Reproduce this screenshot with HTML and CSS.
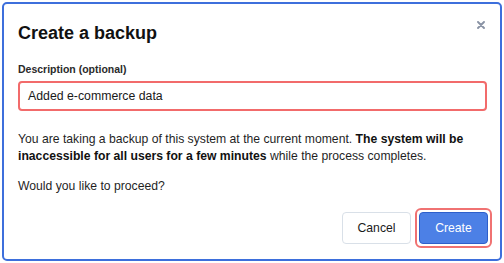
FILE: index.html
```html
<!DOCTYPE html>
<html lang="en">
<head>
<meta charset="utf-8">
<title>Create a backup</title>
<link rel="stylesheet" href="styles.css">
</head>
<body>
<div class="dialog">
  <div class="header">
    <h1 class="title">Create a backup</h1>
    <button class="close" aria-label="Close">
      <svg width="8" height="8" viewBox="0 0 8 8"><path d="M1 1L7 7M7 1L1 7" stroke="#8a93a5" stroke-width="1.9" stroke-linecap="round"/></svg>
    </button>
  </div>
  <label class="label" for="desc">Description (optional)</label>
  <div class="input" id="desc">Added e-commerce data</div>
  <p class="text">You are taking a backup of this system at the current moment. <strong>The system will be inaccessible for all users for a few minutes</strong> while the process completes.</p>
  <p class="text second">Would you like to proceed?</p>
  <div class="actions">
    <button class="btn cancel">Cancel</button>
    <span class="ring"><button class="btn create">Create</button></span>
  </div>
</div>
</body>
</html>
```
FILE: styles.css
```css
html, body {
  margin: 0;
  padding: 0;
  background: #ffffff;
}
body {
  font-family: "Liberation Sans", Arial, sans-serif;
  color: #1a1a1a;
}
.dialog {
  box-sizing: border-box;
  margin: 2px;
  width: 500px;
  height: 259px;
  border: 2px solid #3d6fdc;
  border-radius: 5px;
  padding: 17px 14px 0;
  display: flex;
  flex-direction: column;
}
.header {
  display: flex;
  justify-content: space-between;
  align-items: flex-start;
}
.title {
  margin: 0;
  font-size: 18px;
  line-height: 24px;
  font-weight: 700;
  color: #111111;
}
.close {
  border: 0;
  background: none;
  padding: 0;
  margin: 0 1px 0 0;
  width: 8px;
  height: 8px;
  display: flex;
}
.label {
  display: block;
  margin-top: 17px;
  font-size: 10.5px;
  line-height: 14px;
  font-weight: 700;
  color: #2a2a2a;
}
.input {
  box-sizing: border-box;
  margin-top: 5px;
  margin-right: -1px;
  height: 30px;
  border: 2px solid #f26b6b;
  border-radius: 4px;
  padding: 0 8px;
  font-size: 12.3px;
  line-height: 26px;
  color: #1a1a1a;
}
.text {
  margin: 20px 0 0;
  font-size: 12.2px;
  line-height: 16.5px;
  color: #1f1f1f;
}
.text.second {
  margin-top: 13.5px;
}
.text strong {
  font-weight: 700;
  color: #111111;
}
.actions {
  margin-top: auto;
  margin-bottom: 11px;
  margin-right: -6px;
  display: flex;
  justify-content: flex-end;
  align-items: center;
  gap: 4px;
}
.btn {
  box-sizing: border-box;
  width: 69px;
  height: 32px;
  border-radius: 4px;
  font-family: inherit;
  font-size: 12.2px;
  padding: 0;
  cursor: pointer;
}
.cancel {
  background: #ffffff;
  border: 1px solid #d9e0e8;
  color: #1a1a1a;
}
.ring {
  display: inline-flex;
  padding: 2px;
  border: 2px solid #f07272;
  border-radius: 6px;
}
.create {
  background: #4c80e6;
  border: 1px solid #2d5fcb;
  color: #ffffff;
}
```
